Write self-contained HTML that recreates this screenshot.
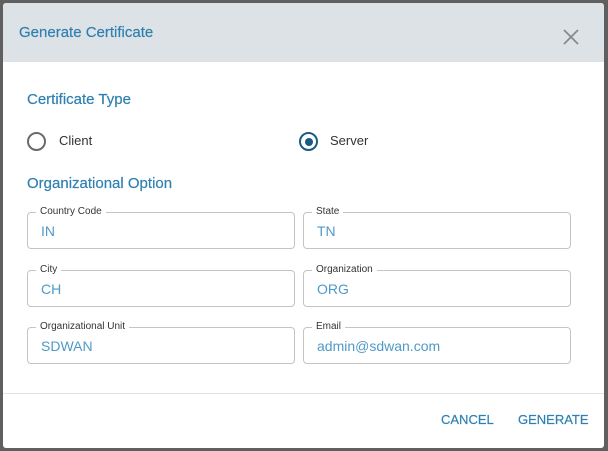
<!DOCTYPE html><html><head><style>
body{margin:0;width:608px;height:451px;background:#5f5f5f;font-family:"Liberation Sans",sans-serif;position:relative;overflow:hidden}
.dlg{position:absolute;left:3px;top:3px;width:601px;height:445px;background:#fff;border-radius:3px;overflow:hidden}
.hd{position:absolute;left:0;top:0;width:601px;height:59px;background:#dde2e6}
.t{position:absolute;color:#2f80b1}
.f{position:absolute;width:266px;height:35px;border:1px solid #c4c4c4;border-radius:4px}
.f span{position:absolute;top:-7px;left:8px;background:#fff;padding:0 4px;font-size:10px;color:#333}
.f b{position:absolute;left:13px;top:10px;font-weight:normal;font-size:14px;color:#4f9ac6}
.r{position:absolute;width:15px;height:15px;border:2px solid #6a6a6a;border-radius:50%}
</style></head><body><div class="dlg">
<div class="hd"></div>
<div class="t" style="left:16px;top:21px;font-size:15px;-webkit-text-stroke:0.2px #2f80b1">Generate Certificate</div>
<svg style="position:absolute;left:560px;top:26px" width="16" height="16"><path d="M1 1L15 15M15 1L1 15" stroke="#8a8a8a" stroke-width="1.8"/></svg>
<div class="t" style="left:24px;top:88px;font-size:15px;-webkit-text-stroke:0.2px #2f80b1">Certificate Type</div>
<div class="r" style="left:24px;top:129px"></div>
<div style="position:absolute;left:56px;top:130px;font-size:13px;color:#333">Client</div>
<div class="r" style="left:296px;top:129px;border-color:#1b5a86"><div style="position:absolute;left:3.5px;top:3.5px;width:8px;height:8px;border-radius:50%;background:#1b5a86"></div></div>
<div style="position:absolute;left:327px;top:130px;font-size:13px;color:#333">Server</div>
<div class="t" style="left:24px;top:172px;font-size:15px;-webkit-text-stroke:0.2px #2f80b1">Organizational Option</div>
<div class="f" style="left:24px;top:209px"><span>Country Code</span><b>IN</b></div>
<div class="f" style="left:300px;top:209px"><span>State</span><b>TN</b></div>
<div class="f" style="left:24px;top:267px"><span>City</span><b>CH</b></div>
<div class="f" style="left:300px;top:267px"><span>Organization</span><b>ORG</b></div>
<div class="f" style="left:24px;top:324px"><span>Organizational Unit</span><b>SDWAN</b></div>
<div class="f" style="left:300px;top:324px"><span>Email</span><b>admin@sdwan.com</b></div>
<div style="position:absolute;left:0;top:390px;width:601px;height:1px;background:#e3e3e3"></div>
<div class="t" style="left:438px;top:409px;font-size:13px;-webkit-text-stroke:0.2px #2f80b1">CANCEL</div>
<div class="t" style="left:515px;top:409px;font-size:13px;-webkit-text-stroke:0.2px #2f80b1">GENERATE</div>
</div></body></html>
